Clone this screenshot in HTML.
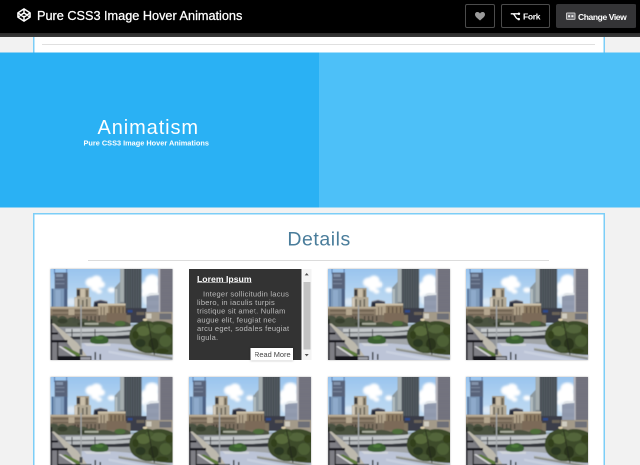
<!DOCTYPE html>
<html lang="en">
<head>
<meta charset="utf-8">
<title>Pure CSS3 Image Hover Animations</title>
<style>
html,body{margin:0;padding:0;}
body{width:640px;height:465px;overflow:hidden;background:#f2f2f2;position:relative;font-family:"Liberation Sans",sans-serif;}
#wrap{position:absolute;left:0;top:0;width:1280px;height:930px;transform:scale(0.5);transform-origin:0 0;will-change:transform;}
.abs{position:absolute;white-space:nowrap;line-height:1;}
#hdr{position:absolute;left:0;top:0;width:1280px;height:66px;background:#000;}
#hdrb{position:absolute;left:0;top:66px;width:1280px;height:8px;background:linear-gradient(#2b2b2b,#3a3a3a);}
#title{left:74px;top:18.6px;font-size:25.4px;color:#fff;-webkit-text-stroke:0.5px #fff;font-weight:normal;letter-spacing:0;}
.btn{position:absolute;top:8px;height:44px;border:2px solid #4b4b4b;border-radius:4px;box-sizing:content-box;}
#b1{left:930px;width:56px;}
#b2{left:1002px;width:94px;}
#b3{left:1112px;width:160px;height:48px;border:none;background:#343436;border-radius:4px;}
#fork{left:1046px;top:25.4px;font-size:17px;font-weight:bold;color:#fff;letter-spacing:-0.6px;}
#cv{left:1156px;top:26px;font-size:17px;font-weight:bold;color:#fff;letter-spacing:-0.8px;}
#toppanel{position:absolute;left:66px;top:60px;width:1138px;height:60px;background:#fff;border:3px solid #7ccef7;}
#tophr{position:absolute;left:84px;top:88px;width:1106px;height:2px;background:#e0e0e0;}
#heroL{position:absolute;left:0;top:105px;width:638px;height:310px;background:#2ab1f4;}
#heroR{position:absolute;left:638px;top:105px;width:642px;height:310px;background:#4dc0f8;}
#h1{left:195px;top:233.6px;font-size:40px;color:#fff;letter-spacing:1.8px;}
#h2{left:167px;top:279px;font-size:14.7px;font-weight:bold;color:#fff;}
#panel{position:absolute;left:66px;top:426px;width:1138px;height:600px;background:#fff;border:3px solid #7ccef7;}
#det{left:574.8px;top:458.4px;font-size:39px;color:#4a7d9b;letter-spacing:1.1px;}
#hr2{position:absolute;left:176px;top:520px;width:922px;height:2px;background:#dcdcdc;}
.img{position:absolute;width:244px;height:182px;box-shadow:0 0 3px rgba(0,0,0,.35);overflow:hidden;background:#9ab;}
.img svg{position:absolute;left:0;top:0;width:244px;height:182px;display:block;}
#dark{position:absolute;left:378px;top:538px;width:224.8px;height:182px;background:#333;}
#sb{position:absolute;left:605.2px;top:538px;width:18px;height:182px;background:#f3f3f3;}
#thumb{position:absolute;left:1.4px;top:26px;width:14px;height:135.4px;background:#c3c3c3;}
#lh{left:394px;top:549.8px;font-size:17.4px;font-weight:bold;color:#fff;text-decoration:underline;}
.p{font-size:15px;color:#bdbdbd;letter-spacing:0.5px;}
#rm{position:absolute;left:501px;top:696px;width:85px;height:25px;background:#fff;box-shadow:0 0 4px rgba(0,0,0,.4);}
#rmt{left:508px;top:702px;font-size:14.8px;color:#444;}
</style>
</head>
<body>
<svg width="0" height="0" style="position:absolute">
<defs>
<symbol id="city" viewBox="0 0 122 91" preserveAspectRatio="none">
<defs>
<linearGradient id="sky" x1="0" y1="0" x2="0" y2="1"><stop offset="0" stop-color="#94c1ee"/><stop offset="0.5" stop-color="#b6d5f1"/><stop offset="1" stop-color="#c8dff3"/></linearGradient>
<filter id="b1" x="-20%" y="-20%" width="140%" height="140%"><feGaussianBlur stdDeviation="1.1"/></filter>
<filter id="b2" x="-5%" y="-5%" width="110%" height="110%"><feGaussianBlur stdDeviation="0.45"/></filter>
<pattern id="hs" width="2" height="1.4" patternUnits="userSpaceOnUse"><rect width="2" height="0.6" fill="#5a5a66"/></pattern>
<pattern id="vs" width="2.4" height="2" patternUnits="userSpaceOnUse"><rect width="1" height="2" fill="#3f464d"/></pattern>
<pattern id="hs2" width="2" height="1.6" patternUnits="userSpaceOnUse"><rect width="2" height="0.7" fill="#aab2c2"/></pattern>
</defs>
<g filter="url(#b2)">
<rect x="-5" y="-5" width="132" height="60" fill="url(#sky)"/>
<!-- clouds -->
<g filter="url(#b1)" fill="#fff">
<ellipse cx="41" cy="13.500" rx="6" ry="5"/><ellipse cx="46" cy="11" rx="5.500" ry="4.500"/><ellipse cx="50" cy="15.500" rx="4.500" ry="3.500"/><ellipse cx="44.500" cy="19" rx="4" ry="3.500"/><ellipse cx="48.500" cy="22.500" rx="3" ry="2.200"/>
<ellipse cx="61" cy="21" rx="3.800" ry="2.600"/>
<ellipse cx="101.500" cy="11.500" rx="7" ry="6"/><ellipse cx="97" cy="18" rx="6.500" ry="6"/><ellipse cx="103" cy="20" rx="6" ry="8"/><ellipse cx="95" cy="25" rx="4.500" ry="4"/>
<ellipse cx="100" cy="31" rx="8" ry="6" fill="#e2edf7"/>
<ellipse cx="21" cy="33" rx="5" ry="4" fill="#dbe8f5"/>
</g>
<!-- tower 1 -->
<rect x="3.600" y="-1" width="0.900" height="6" fill="#4c6ea4"/><rect x="15.700" y="-1" width="0.900" height="6" fill="#4c6ea4"/>
<rect x="4.200" y="3.500" width="12.900" height="17" fill="#58637a"/>
<rect x="5.500" y="5" width="7" height="3" fill="#8291a8"/><rect x="5" y="10" width="9" height="1.200" fill="#77849a"/><rect x="5" y="14" width="9" height="1.200" fill="#77849a"/>
<rect x="1" y="19.600" width="15.800" height="19.500" fill="#7e9aba"/>
<rect x="13.600" y="19.600" width="3.400" height="19.500" fill="#4d6284"/><rect x="1" y="19.600" width="1.600" height="19.500" fill="#4a6c96"/>
<rect x="5" y="21" width="5" height="17" fill="#8eaacb"/>
<!-- building 2 -->
<rect x="26" y="19" width="12.600" height="11" fill="#a39782"/>
<rect x="26.300" y="20.500" width="3" height="6.500" fill="#38383a"/><rect x="30" y="20" width="4.500" height="9" fill="#c9bea9"/><rect x="35.500" y="21" width="2" height="7" fill="#6e6656"/>
<rect x="23.900" y="28.200" width="16.600" height="13" fill="#b3aa97"/>
<rect x="27.300" y="30" width="1.600" height="11" fill="#6d675b"/><rect x="31.500" y="31" width="1.600" height="10" fill="#6d675b"/><rect x="35.500" y="30" width="1.600" height="11" fill="#6d675b"/><rect x="24.500" y="29" width="2" height="11" fill="#d3cbbb"/>
<!-- dark bldg -->
<polygon points="42.400,42 43.600,32.600 50,30.900 57,32.600 57.400,42" fill="#3b4151"/>
<polyline points="43.600,32.600 50,30.900 57,32.600" fill="none" stroke="#a0a4ae" stroke-width="0.900"/>
<rect x="44.500" y="34" width="5" height="5" fill="#232736"/>
<!-- annex + central tower -->
<polygon points="64.200,36 64.200,18.600 69.700,12.600 69.700,36" fill="#8c989f"/>
<rect x="64.800" y="20" width="2" height="15" fill="#b5bfc2"/>
<rect x="69.600" y="-1" width="21.500" height="47" fill="#555d64"/>
<rect x="73.500" y="-1" width="17.600" height="47" fill="url(#vs)"/>
<rect x="69.600" y="-1" width="4" height="47" fill="#a5adaf"/>
<rect x="69.600" y="33" width="4" height="13" fill="#7d8589"/>
<!-- right tower -->
<rect x="107.700" y="-1" width="15" height="44" fill="#84848e"/>
<rect x="107.700" y="-1" width="15" height="44" fill="url(#hs)"/>
<rect x="107.700" y="-1" width="2" height="44" fill="#b9b9c1"/>
<!-- front right bldg -->
<polygon points="96,45 96,28 99,24.500 108.300,23.900 108.300,45" fill="#7c869e"/>
<polygon points="96,45 96,28 99,24.500 108.300,23.900 108.300,45" fill="url(#hs2)"/>
<polygon points="96.300,27.700 99,24.400 108.300,23.800 108.300,26 99.600,26.600" fill="#e3e7ea"/>
<!-- tan bldg -->
<rect x="47.500" y="34.500" width="27.500" height="14" fill="#b2a48c"/>
<rect x="47.500" y="34.500" width="27.500" height="2" fill="#cbbfa8"/>
<rect x="57.750" y="36.500" width="17.250" height="12" fill="#8c7a62"/>
<rect x="50" y="38" width="1.200" height="8" fill="#7d705c"/><rect x="53" y="38" width="1.200" height="8" fill="#7d705c"/><rect x="60" y="38" width="1.200" height="8" fill="#5f5242"/><rect x="64" y="38" width="1.200" height="8" fill="#5f5242"/><rect x="68" y="38" width="1.200" height="8" fill="#5f5242"/><rect x="72" y="38" width="1.200" height="8" fill="#5f5242"/>
<!-- low bldgs left -->
<rect x="-2" y="37.800" width="50" height="17" fill="#8b7d69"/>
<rect x="-2" y="37.800" width="50" height="1.800" fill="#bcae96"/>
<rect x="2" y="41" width="44" height="1.500" fill="#6d6050"/><rect x="2" y="45" width="44" height="1.500" fill="#6d6050"/>
<rect x="18" y="40" width="6" height="14" fill="#b5a790"/>
<!-- dark middle and right bldgs -->
<rect x="75" y="39" width="21" height="15" fill="#3a3e48"/>
<rect x="77" y="41" width="5" height="2.500" fill="#2f4a8a"/><rect x="86" y="43" width="8" height="3" fill="#6b6458"/>
<rect x="95" y="43" width="28" height="12" fill="#a39a89"/>
<rect x="109" y="44.500" width="12" height="6" fill="#6e7078"/><rect x="96" y="44.500" width="5" height="5" fill="#d0ccc0"/>
<!-- mid band lower -->
<rect x="-2" y="46" width="82" height="13" fill="#7f7361"/>
<rect x="-2" y="46" width="9" height="13" fill="#6d6558"/>
<rect x="22" y="46" width="9" height="8" fill="#74685a"/><rect x="24" y="47.500" width="1.200" height="5" fill="#3d372f"/><rect x="27" y="47.500" width="1.200" height="5" fill="#3d372f"/>
<rect x="34" y="46" width="20" height="7" fill="#7d7060"/><rect x="36" y="47" width="1.200" height="5" fill="#4b443a"/><rect x="40" y="47" width="1.200" height="5" fill="#4b443a"/><rect x="44" y="47" width="1.200" height="5" fill="#4b443a"/><rect x="48" y="47" width="1.200" height="5" fill="#4b443a"/>
<rect x="56" y="44" width="20" height="9" fill="#7b6b58"/>
<!-- tree band -->
<path d="M-2 60 V49 C1 46 5 46 8 49 C10 46 14 46 17 50 C20 47 25 48 28 51 C31 49 35 49 38 52 C41 50 45 51 47 54 C52 52 58 53 63 55 C68 51 74 51 80 55 V60 Z" fill="#474f3f" opacity="0.92"/><ellipse cx="12" cy="52" rx="5" ry="2.500" fill="#39402f"/><ellipse cx="33" cy="55" rx="6" ry="2" fill="#39402f"/>
<ellipse cx="69.500" cy="54.500" rx="5.500" ry="2.800" fill="#4d6d3a"/>
<rect x="34" y="53.800" width="14" height="2" fill="#a9ad9d"/>
<!-- ground base -->
<rect x="-2" y="58" width="126" height="36" fill="#8f9398"/>
<!-- overpasses -->
<polygon points="15,59.600 64,58.900 92,56.400 92,60 64,62.600 15,63.300" fill="#c5c9cb"/>
<polygon points="15,63.300 64,62.600 86,60.500 86,62 64,64.100 15,64.400" fill="#50555a"/>
<polygon points="15,64.300 64,63.500 80,62.600 80,66 64,67 15,67.600" fill="#b7bbbd"/>
<polygon points="17,67.600 64,67 79,66 79,69.600 64,70.200 17,70.400" fill="#32363b"/>
<rect x="21" y="60" width="1" height="9" fill="#3c3f44"/><rect x="44" y="60" width="1" height="9" fill="#3c3f44"/>
<rect x="57" y="70" width="25" height="5.500" fill="#a1a5a9"/>
<!-- right lower road -->
<polygon points="31,74 64,74.500 82,76 123,86 123,93 31,93" fill="#bcc4d7"/>
<polygon points="33,74 60,74.500 60,77 36,77" fill="#d0d4dc"/>
<polygon points="68,78.800 122,87.800 122,90.800 68,81.400" fill="#8b8f8b"/><polygon points="68,78.800 122,87.800 122,88.600 68,79.500" fill="#b9bdb9"/>
<polygon points="58,81.500 118,92 100,92 58,84" fill="#c9d0e0"/>
<!-- left part -->
<polygon points="-2,55 3,55 34,92 -2,92" fill="#77777d"/>
<polygon points="1,54.500 3.500,54.500 14,63 27,74 40,92 30,92 20,78 9,64" fill="#bdb9ad"/>
<polygon points="4,62 8,66 22,84 27,92 -2,92 -2,62" fill="#7e7e84"/>
<polygon points="8,77.500 10,77 25,86.500 27,89 24,88" fill="#d6d6d6"/>
<polygon points="12,78 15,77.500 29,84.500 30,88 26,87" fill="#5b7a3a"/>
<rect x="0.300" y="50" width="1.300" height="42" fill="#1f1f23"/>
<rect x="1" y="63.500" width="6.500" height="2" fill="#18181c"/>
<rect x="1.500" y="71" width="15.500" height="2.400" fill="#18181c"/>
<rect x="6.600" y="73" width="1.200" height="18" fill="#222226"/>
<rect x="7.500" y="87" width="33.500" height="5" fill="#16161b"/>
<rect x="30" y="88" width="10" height="3" fill="#9a9ca4"/>
<rect x="44" y="83" width="1.500" height="8" fill="#33363b"/><rect x="49" y="85" width="1.500" height="6" fill="#33363b"/>
<!-- mid tree -->
<path d="M39.500 72 C40 68 44 66.500 47 67 C50 65 55 66 57 69 C59 71 58 74 55 74.500 C50 75.500 44 75 41 74 Z" fill="#3a6130"/>
<ellipse cx="49" cy="69" rx="4" ry="1.800" fill="#4c7838"/>
<!-- big tree -->
<path d="M79 70 C78 62 82 56 88 54 C92 51 98 51 102 53 C108 51 116 52 123 56 V86 C116 86 108 85 102 84 C96 85 90 83 86 80 C82 78 80 75 79 70 Z" fill="#3e4c2b"/>
<ellipse cx="93" cy="62" rx="7" ry="5" fill="#586b3b"/><ellipse cx="108" cy="60" rx="8" ry="4.500" fill="#52653a"/><ellipse cx="115" cy="72" rx="6" ry="6" fill="#4d6036"/><ellipse cx="90" cy="74" rx="5" ry="4" fill="#2c3820"/><ellipse cx="103" cy="75" rx="5" ry="6" fill="#2a351f"/>
<ellipse cx="99" cy="57" rx="4" ry="2.500" fill="#4a5c33"/><ellipse cx="119" cy="62" rx="4" ry="4" fill="#34421f"/><ellipse cx="96" cy="80" rx="5" ry="3" fill="#445530"/><ellipse cx="112" cy="82" rx="6" ry="2.500" fill="#33401f"/><ellipse cx="85" cy="66" rx="3" ry="4" fill="#33401f"/>
<line x1="97.500" y1="53" x2="104" y2="86" stroke="#23281c" stroke-width="0.800"/>
<ellipse cx="94.500" cy="50.800" rx="2.200" ry="1.200" fill="#e0d2ae"/>
<!-- lamp pole -->
<rect x="29.900" y="36" width="1.300" height="46" fill="#a3a7aa"/>
<rect x="29" y="80" width="3" height="6" fill="#4c4f54"/>
</g>
</symbol>
</defs>
</svg>

<div id="wrap">
<div id="toppanel"></div>
<div id="tophr"></div>
<div id="hdr"></div>
<div id="hdrb"></div>
<svg class="abs" id="logo" style="left:33.7px;top:15.7px" width="28" height="28" viewBox="0 0 28 28"><path d="M14 1.800 L26.200 9.800 V18.200 L14 26.200 L1.800 18.200 V9.800 Z M14 1.800 V9.800 M14 18.200 V26.200 M1.800 9.800 L14 18.200 L26.200 9.800 M1.800 18.200 L14 9.800 L26.200 18.200" fill="none" stroke="#fff" stroke-width="2.900" stroke-linejoin="round"/></svg>
<span class="abs" id="title">Pure CSS3 Image Hover Animations</span>
<div class="btn" id="b1"></div>
<div class="btn" id="b2"></div>
<div class="btn" id="b3"></div>
<svg class="abs" id="heart" style="left:950px;top:24px" width="20" height="17" viewBox="0 0 20 17"><path d="M10 17 C4 12 0 9 0 5 C0 2 2 0 5 0 C7 0 9 1 10 3 C11 1 13 0 15 0 C18 0 20 2 20 5 C20 9 16 12 10 17 Z" fill="#9a9a9a"/></svg>
<svg class="abs" id="forki" style="left:1021px;top:24px" width="20" height="18" viewBox="0 0 20 18"><path d="M0.500 3.600 H17 M4.500 3.600 C9 3.600 9.500 14.200 16 14.200" fill="none" stroke="#fff" stroke-width="2.600"/><circle cx="16.800" cy="3.600" r="2.500" fill="#fff"/><circle cx="16.500" cy="14.200" r="2.500" fill="#fff"/></svg>
<span class="abs" id="fork">Fork</span>
<svg class="abs" id="cvi" style="left:1131.6px;top:25.4px" width="19" height="14.8" viewBox="0 0 19 14.800"><rect x="1" y="1" width="17" height="12.800" rx="1.500" fill="#6c6c70" stroke="#c8c8c8" stroke-width="2"/><rect x="4.200" y="5.400" width="4" height="4" fill="#f4f4f4"/><rect x="10.800" y="5.400" width="4" height="4" fill="#f4f4f4"/></svg>
<span class="abs" id="cv">Change View</span>

<div id="heroL"></div>
<div id="heroR"></div>
<span class="abs" id="h1">Animatism</span>
<span class="abs" id="h2">Pure CSS3 Image Hover Animations</span>

<div id="panel"></div>
<span class="abs" id="det">Details</span>
<div id="hr2"></div>

<div class="img" style="left:100.5px;top:538px"><svg><use href="#city"/></svg></div>
<div class="img" style="left:655.5px;top:538px"><svg><use href="#city"/></svg></div>
<div class="img" style="left:932.4px;top:538px"><svg><use href="#city"/></svg></div>
<div class="img" style="left:100.5px;top:754px"><svg><use href="#city"/></svg></div>
<div class="img" style="left:378px;top:754px"><svg><use href="#city"/></svg></div>
<div class="img" style="left:655.5px;top:754px"><svg><use href="#city"/></svg></div>
<div class="img" style="left:932.4px;top:754px"><svg><use href="#city"/></svg></div>

<div id="dark"></div>
<div id="sb"><div id="thumb"></div>
<svg style="position:absolute;left:3.6px;top:7.8px" width="8.8" height="4.8" viewBox="0 0 10 6"><path d="M0 6 L5 0 L10 6 Z" fill="#505050"/></svg>
<svg style="position:absolute;left:3.6px;top:170px" width="8.8" height="4.8" viewBox="0 0 10 6"><path d="M0 0 L5 6 L10 0 Z" fill="#505050"/></svg>
</div>
<span class="abs" id="lh">Lorem Ipsum</span>
<span class="abs p" id="p1" style="left:406px;top:579.6px">Integer sollicitudin lacus</span>
<span class="abs p" id="p2" style="left:394px;top:597px">libero, in iaculis turpis</span>
<span class="abs p" id="p3" style="left:394px;top:614.4px">tristique sit amet. Nullam</span>
<span class="abs p" id="p4" style="left:394px;top:631.8px">augue elit, feugiat nec</span>
<span class="abs p" id="p5" style="left:394px;top:649.2px">arcu eget, sodales feugiat</span>
<span class="abs p" id="p6" style="left:394px;top:666.6px">ligula.</span>
<div id="rm"></div>
<span class="abs" id="rmt">Read More</span>
</div>
</body>
</html>
